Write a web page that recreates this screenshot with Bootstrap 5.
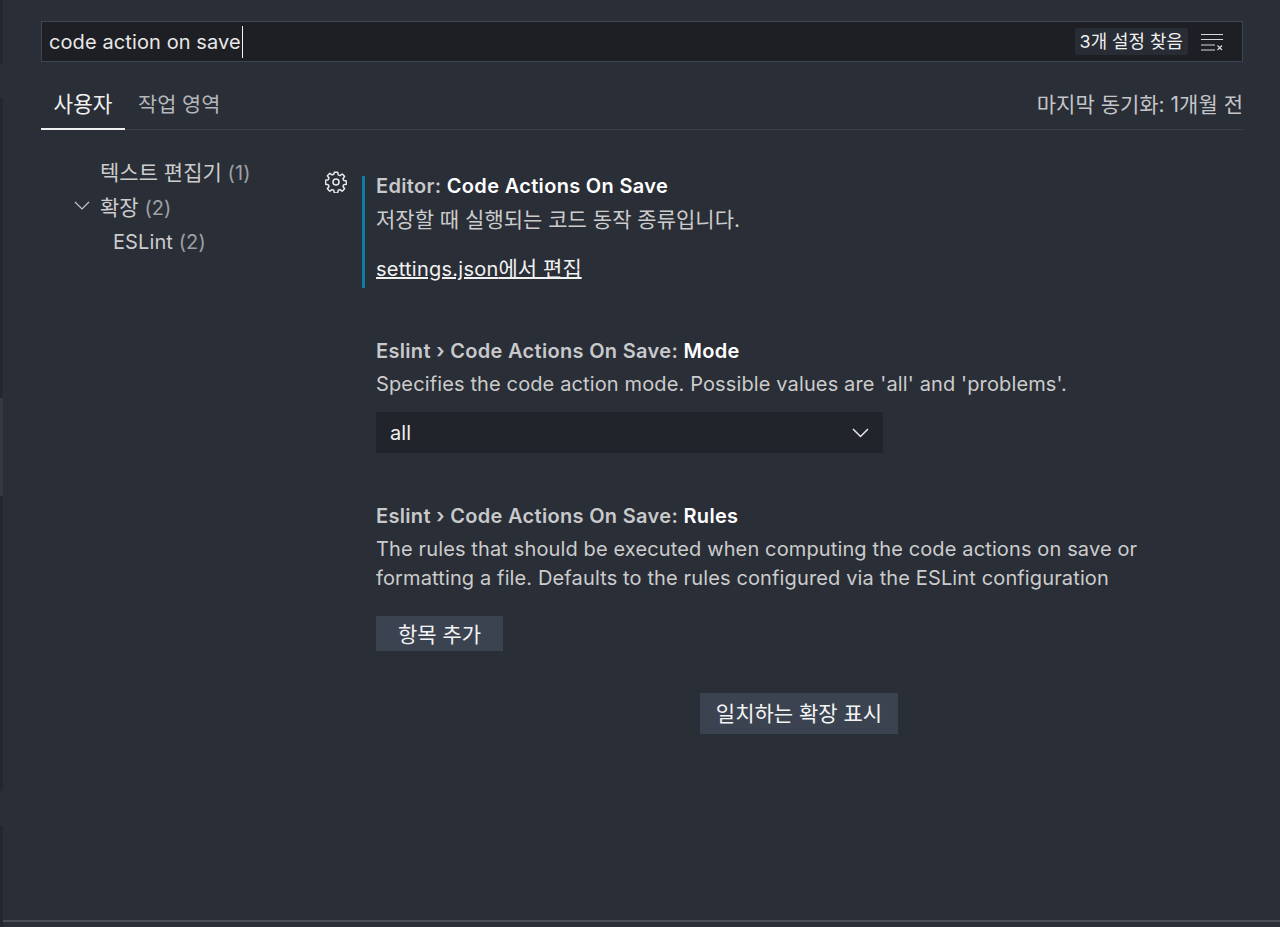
<!DOCTYPE html>
<html lang="ko">
<head>
    <meta charset="UTF-8">
    <meta name="viewport" content="width=device-width, initial-scale=1.0">
    <title>Settings</title>
    <link href="https://cdn.jsdelivr.net/npm/bootstrap@5.3.0/dist/css/bootstrap.min.css" rel="stylesheet">
    <style>
        html, body {
            height: 100%;
        }
        body {
            background: #2a2e37;
            color: #cccccc;
            font-family: Inter, "Noto Sans CJK KR", sans-serif;
            font-size: 20px;
            line-height: 30px;
            letter-spacing: 0.1px;
            overflow: hidden;
        }
        .app-shell {
            height: 927px;
        }
        .edge-strip {
            width: 3px;
        }
        .edge-seg-a { height: 64px; background: #24272f; }
        .edge-seg-b { height: 34px; }
        .edge-seg-c { height: 300px; background: #24272f; }
        .edge-seg-d { height: 98px; background: #343842; }
        .edge-seg-e { height: 295px; background: #24272f; }
        .edge-seg-f { height: 35px; }
        .edge-seg-g { height: 101px; background: #24272f; }

        .settings-main {
            padding: 21px 37px 0 38px;
        }
        .search-box {
            height: 41px;
            background: #1e1f24;
            border: 1px solid #3d4454;
            padding: 0 7px;
            color: #e8e8e8;
        }
        .search-caret {
            width: 1.5px;
            height: 32px;
            background: #f4f4f4;
            margin-left: 1px;
        }
        .search-count {
            background: #282c35;
            color: #f0f0f0;
            font-size: 17.9px;
            line-height: 27px;
            letter-spacing: 0;
            padding: 0 5px;
            border-radius: 3px;
            margin-right: 12px;
        }
        .clear-icon {
            margin-right: 11px;
        }
        .tab-row {
            height: 68px;
            border-bottom: 1px solid #3d3f42;
        }
        .tab-item {
            padding: 0 13px;
            height: 68px;
            line-height: 85px;
            font-size: 20.8px;
            letter-spacing: 0;
            color: #b4b6ba;
            margin-bottom: -1px;
        }
        .tab-active {
            width: 84px;
            padding: 0;
            text-align: center;
            color: #f0f0f0;
            font-size: 21.3px;
            border-bottom: 2px solid #f0f0f0;
        }
        .sync-label {
            line-height: 85px;
            color: #c4c5c8;
            font-size: 21px;
            letter-spacing: 0;
        }
        .toc-col {
            width: 284px;
            padding-top: 25px;
            line-height: 35px;
        }
        .toc-line {
            height: 35px;
            padding-left: 59px;
            position: relative;
        }
        .toc-sub {
            padding-left: 72px;
        }
        .toc-count {
            color: #9ea0a5;
        }
        .toc-chevron {
            position: absolute;
            left: 33px;
            top: 11px;
        }
        .gear-col {
            width: 37px;
            padding-top: 35px;
        }
        .setting-block {
            width: 785px;
            padding-left: 14px;
            margin-bottom: 53px;
        }
        .setting-first {
            margin-top: 46px;
            border-left: 3px solid #0f7c9e;
            padding-left: 11px;
            height: 112px;
        }
        .setting-title {
            font-weight: 600;
            line-height: 20px;
            letter-spacing: 0.32px;
            color: #c8c9cb;
            margin-bottom: 9px;
        }
        .setting-title b {
            font-weight: 600;
            color: #ffffff;
        }
        .setting-desc {
            line-height: 29px;
            letter-spacing: 0.13px;
            color: #cccccc;
        }
        .json-link {
            display: inline-block;
            color: #f2f2f2;
            letter-spacing: 0.25px;
            text-decoration: underline;
            margin-top: 20px;
        }
        .mode-select {
            width: 507px;
            height: 41px;
            margin-top: 13px;
            background: #21242b;
            color: #f0f0f0;
            padding: 0 14px;
        }
        .add-btn, .ext-btn {
            background: #3b4351;
            color: #f4f4f4;
            border: 0;
            border-radius: 0;
            padding: 0;
            font-size: 21px;
            letter-spacing: 0;
            text-align: center;
        }
        .add-btn {
            width: 127px;
            height: 35px;
            line-height: 37px;
            margin-top: 23px;
        }
        .ext-btn {
            width: 198px;
            height: 41px;
            line-height: 41px;
            margin-left: 338px;
            margin-top: -14px;
        }
        .bottom-rule {
            height: 2px;
            background: #4a4e58;
            margin-top: auto;
            margin-bottom: 5px;
        }
        .ko-text {
            font-size: 21px;
            letter-spacing: 0;
        }
    </style>
</head>
<body>
    <div class="app-shell d-flex">
        <!-- left edge of the window behind -->
        <div class="edge-strip flex-shrink-0 d-flex flex-column">
            <div class="edge-seg-a"></div>
            <div class="edge-seg-b"></div>
            <div class="edge-seg-c"></div>
            <div class="edge-seg-d"></div>
            <div class="edge-seg-e"></div>
            <div class="edge-seg-f"></div>
            <div class="edge-seg-g"></div>
        </div>

        <div class="flex-grow-1 d-flex flex-column">
            <div class="settings-main flex-grow-1">
                <!-- Search -->
                <div class="search-box d-flex align-items-center">
                    <span>code action on save</span><span class="search-caret"></span>
                    <span class="search-count ms-auto">3개 설정 찾음</span>
                    <svg class="clear-icon" width="24" height="18" viewBox="0 0 24 18" fill="none" stroke="#d8d8d8" stroke-width="1.2">
                        <path d="M1 1.500h22M1 6.500h22M1 12h14M1 17h14M17.500 12.500l4.500 4.500M22 12.500l-4.500 4.500"/>
                    </svg>
                </div>

                <!-- Tabs -->
                <div class="tab-row d-flex">
                    <div class="tab-item tab-active">사용자</div>
                    <div class="tab-item">작업 영역</div>
                    <div class="sync-label ms-auto">마지막 동기화: 1개월 전</div>
                </div>

                <div class="d-flex">
                    <!-- Tree -->
                    <div class="toc-col flex-shrink-0">
                        <div class="toc-line"><span class="ko-text">텍스트 편집기</span> <span class="toc-count">(1)</span></div>
                        <div class="toc-line">
                            <svg class="toc-chevron" width="16" height="10" viewBox="0 0 16 10" fill="none" stroke="#c8c8c8" stroke-width="1.2"><path d="M1 1l7 7 7-7"/></svg>
                            <span class="ko-text">확장</span> <span class="toc-count">(2)</span>
                        </div>
                        <div class="toc-line toc-sub">ESLint <span class="toc-count">(2)</span></div>
                    </div>

                    <!-- Gear -->
                    <div class="gear-col flex-shrink-0">
                        <svg width="22" height="22" viewBox="0 0 22 22" fill="none" stroke="#e8e8e8" stroke-width="1.5" stroke-linejoin="round">
                            <path d="M9.300 1.200h3.400l.5 2.700 1.700.7 2.300-1.600 2.400 2.400-1.600 2.300.7 1.700 2.700.5v3.400l-2.700.5-.7 1.700 1.600 2.300-2.400 2.400-2.300-1.600-1.700.7-.5 2.700H9.300l-.5-2.700-1.700-.7-2.300 1.600-2.400-2.400 1.600-2.300-.7-1.700-2.700-.5V9.200l2.700-.5.7-1.700-1.600-2.300 2.400-2.400 2.300 1.600 1.700-.7z"/>
                            <circle cx="11" cy="11" r="3"/>
                        </svg>
                    </div>

                    <!-- Settings list -->
                    <div class="flex-grow-1">
                        <div class="setting-block setting-first">
                            <div class="setting-title">Editor: <b>Code Actions On Save</b></div>
                            <div class="setting-desc ko-text">저장할 때 실행되는 코드 동작 종류입니다.</div>
                            <a class="json-link" href="#">settings.json<span class="ko-text">에서 편집</span></a>
                        </div>

                        <div class="setting-block">
                            <div class="setting-title">Eslint › Code Actions On Save: <b>Mode</b></div>
                            <div class="setting-desc">Specifies the code action mode. Possible values are 'all' and 'problems'.</div>
                            <div class="mode-select d-flex align-items-center justify-content-between">
                                <span>all</span>
                                <svg width="17" height="10" viewBox="0 0 17 10" fill="none" stroke="#e8e8e8" stroke-width="1.500"><path d="M1 1l7.500 7.500L16 1"/></svg>
                            </div>
                        </div>

                        <div class="setting-block">
                            <div class="setting-title">Eslint › Code Actions On Save: <b>Rules</b></div>
                            <div class="setting-desc">The rules that should be executed when computing the code actions on save or formatting a file. Defaults to the rules configured via the ESLint configuration</div>
                            <button type="button" class="btn add-btn d-block">항목 추가</button>
                        </div>

                        <button type="button" class="btn ext-btn">일치하는 확장 표시</button>
                    </div>
                </div>
            </div>
            <div class="bottom-rule"></div>
        </div>
    </div>
    <script src="https://cdn.jsdelivr.net/npm/bootstrap@5.3.0/dist/js/bootstrap.bundle.min.js"></script>
</body>
</html>
